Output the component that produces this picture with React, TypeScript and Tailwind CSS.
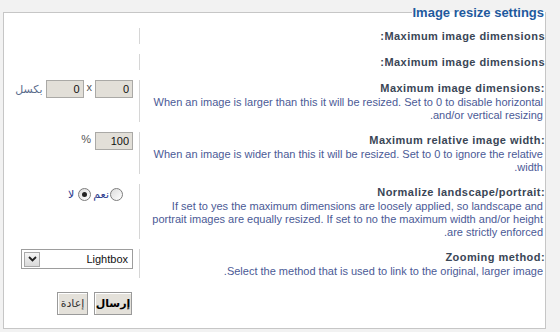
import type { ReactNode } from 'react'

const heading = "text-[11px] leading-[16px] font-bold tracking-[0.45px] text-[#3a4656]"
const desc = "pr-[2px] text-[11px] leading-[13px] text-[#4b5a96]"

function Field({ value }: { value: string }) {
  return (
    <input
      readOnly
      value={value}
      className="h-[18px] w-[38px] border border-[#aaa9a6] bg-[#e2dfd8] pr-[3px] text-right text-[11px] text-[#111] outline-none"
    />
  )
}

function Radio({ checked }: { checked?: boolean }) {
  return (
    <span className="flex h-[13px] w-[13px] items-center justify-center rounded-full border border-[#7d7d7d] bg-gradient-to-br from-[#dcdcdc] to-white">
      {checked && <span className="h-[5px] w-[5px] rounded-full bg-[#222]" />}
    </span>
  )
}

function Row({ title, ltr, text, children }: { title: string; ltr?: boolean; text?: string; children?: ReactNode }) {
  return (
    <div className="flex">
      <div className="w-[406px] shrink-0 border-l border-[#d6d6d6] pl-[7px]">
        <div className={heading}>{ltr ? <span dir="ltr">{title}</span> : title}</div>
        {text && <p className={desc}>{text}</p>}
      </div>
      <div className="flex flex-1 items-start pr-[6px]">{children}</div>
    </div>
  )
}

export default function App() {
  return (
    <div className="min-h-[332px] w-[560px] bg-[#f2f2f2] pl-[3px] pt-[5px] font-['Liberation_Sans','DejaVu_Sans',sans-serif]">
      <fieldset dir="rtl" className="w-[543px] border border-[#c6c6c6] bg-white pb-[13px] pt-[8px]">
        <legend className="px-[1px] text-[13px] leading-[15px] font-bold text-[#1f5a9e]">Image resize settings</legend>

        <div className="flex flex-col gap-[10px]">
          <Row title="Maximum image dimensions:" />
          <Row title="Maximum image dimensions:" />

          <Row
            title="Maximum image dimensions:"
            ltr
            text="When an image is larger than this it will be resized. Set to 0 to disable horizontal and/or vertical resizing."
          >
            <div className="flex items-start gap-[3px]">
              <Field value="0" />
              <span className="text-[11px] leading-[14px] text-[#555]">x</span>
              <Field value="0" />
              <span className="text-[11px] leading-[18px] text-[#5a6b8c]">بكسل</span>
            </div>
          </Row>

          <Row
            title="Maximum relative image width:"
            ltr
            text="When an image is wider than this it will be resized. Set to 0 to ignore the relative width."
          >
            <div className="flex items-start gap-[4px]">
              <Field value="100" />
              <span className="text-[11px] leading-[14px] text-[#555]">%</span>
            </div>
          </Row>

          <Row
            title="Normalize landscape/portrait:"
            ltr
            text="If set to yes the maximum dimensions are loosely applied, so landscape and portrait images are equally resized. If set to no the maximum width and/or height are strictly enforced."
          >
            <div className="flex items-center gap-[1px] pr-[10px] pt-[2px] text-[11px] text-[#2b3a8e]">
              <Radio />
              <span className="ml-[1px]">نعم</span>
              <Radio checked />
              <span className="mr-[3px]">لا</span>
            </div>
          </Row>

          <Row
            title="Zooming method:"
            ltr
            text="Select the method that is used to link to the original, larger image."
          >
            <div className="flex h-[20px] w-[112px] items-center justify-between border border-[#9d9d9d] bg-white px-[2px]">
              <span className="pr-[2px] text-[11px] text-[#111]">Lightbox</span>
              <span className="flex h-[15px] w-[16px] items-center justify-center border border-[#a9a9a9] bg-gradient-to-b from-[#f6f6f6] to-[#d9d9d9]">
                <svg width="9" height="6" viewBox="0 0 9 6">
                  <path d="M1 1 L4.5 4.5 L8 1" fill="none" stroke="#222" strokeWidth="1.8" />
                </svg>
              </span>
            </div>
          </Row>

          <div className="mt-[4px] flex">
            <div className="w-[406px] shrink-0" />
            <div className="flex flex-1 gap-[6px] pr-[7px]">
              <button className="h-[23px] w-[38px] border border-[#9a9a9a] bg-[#e4e1da] text-[11px] font-bold text-black shadow-[inset_1px_1px_0_#fff]">
                إرسال
              </button>
              <button className="h-[23px] w-[31px] border border-[#9a9a9a] bg-[#e4e1da] text-[11px] text-[#333] shadow-[inset_1px_1px_0_#fff]">
                إعادة
              </button>
            </div>
          </div>
        </div>
      </fieldset>
    </div>
  )
}
